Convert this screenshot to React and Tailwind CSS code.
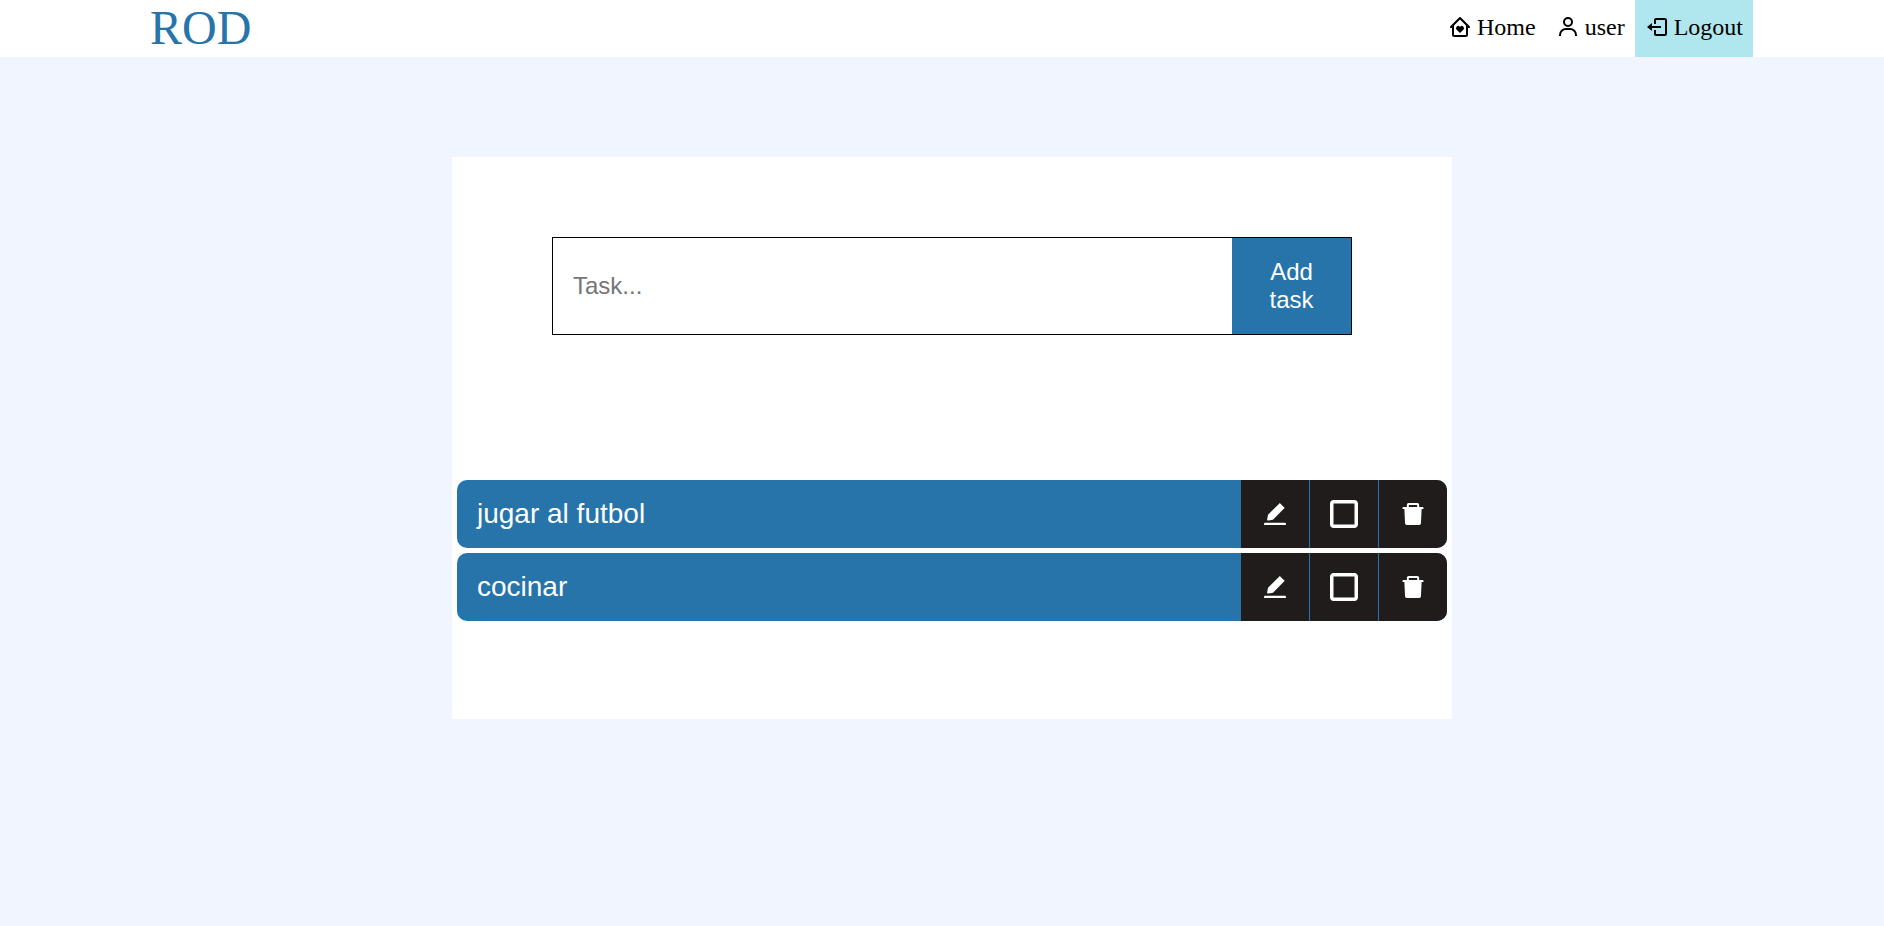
import { useState } from "react";
import { BiHomeHeart, BiUser, BiLogOut } from "react-icons/bi";
import { AiFillEdit, AiFillDelete } from "react-icons/ai";
import { ImCheckboxUnchecked, ImCheckboxChecked } from "react-icons/im";

const links = [
  { label: "Home", icon: BiHomeHeart, active: false },
  { label: "user", icon: BiUser, active: false },
  { label: "Logout", icon: BiLogOut, active: true },
];

function Navbar() {
  return (
    <header className="flex h-[57px] items-stretch justify-between bg-white pr-[131px] pl-[150px] font-['Liberation_Serif',serif]">
      <a href="#" className="flex items-center pb-px text-5xl text-[#2674a9]">
        ROD
      </a>
      <nav className="flex text-2xl text-black">
        {links.map(({ label, icon: Icon, active }) => (
          <a
            key={label}
            href="#"
            className={`flex items-center gap-[5px] px-[10px] pb-[3px] ${active ? "bg-[#b0e7ee]" : ""}`}
          >
            <Icon className="size-6" aria-hidden="true" />
            {label}
          </a>
        ))}
      </nav>
    </header>
  );
}

function Task({ task, onToggle, onRemove }) {
  const button = "flex size-[68px] items-center justify-center bg-[#201c1c]";
  return (
    <li className="flex overflow-hidden rounded-[10px] bg-[#2674a9] text-white">
      <p className="flex flex-1 items-center px-5 text-[28px]">{task.name}</p>
      <div className="flex gap-px">
        <button type="button" aria-label="Edit" className={button}>
          <AiFillEdit className="size-7" />
        </button>
        <button type="button" aria-label="Done" onClick={onToggle} className={button}>
          {task.done ? <ImCheckboxChecked className="size-7" /> : <ImCheckboxUnchecked className="size-7" />}
        </button>
        <button type="button" aria-label="Delete" onClick={onRemove} className={button}>
          <AiFillDelete className="size-7" />
        </button>
      </div>
    </li>
  );
}

export default function App() {
  const [tasks, setTasks] = useState([
    { id: 1, name: "jugar al futbol", done: false },
    { id: 2, name: "cocinar", done: false },
  ]);
  const [name, setName] = useState("");

  const addTask = (event) => {
    event.preventDefault();
    if (!name.trim()) return;
    setTasks([...tasks, { id: Date.now(), name, done: false }]);
    setName("");
  };

  return (
    <div className="min-h-screen bg-[#f0f5ff] font-['Liberation_Sans',sans-serif]">
      <Navbar />
      <div className="pt-[100px] pl-5">
        <main className="mx-auto max-w-[1000px] bg-white px-[5px] pt-20 pb-[98px]">
          <form onSubmit={addTask} className="mx-auto flex max-w-[800px] border border-black text-2xl">
            <input
              type="text"
              aria-label="Task"
              placeholder="Task..."
              value={name}
              onChange={(event) => setName(event.target.value)}
              className="min-w-0 flex-1 bg-white px-5 outline-none placeholder:text-[#757575]"
            />
            <button type="submit" className="w-[119px] bg-[#2674a9] px-5 py-5 leading-7 text-white">
              Add
              <br />
              task
            </button>
          </form>
          <ul className="mt-[145px] flex flex-col gap-[5px]">
            {tasks.map((task) => (
              <Task
                key={task.id}
                task={task}
                onToggle={() => setTasks(tasks.map((t) => (t.id === task.id ? { ...t, done: !t.done } : t)))}
                onRemove={() => setTasks(tasks.filter((t) => t.id !== task.id))}
              />
            ))}
          </ul>
        </main>
      </div>
    </div>
  );
}
